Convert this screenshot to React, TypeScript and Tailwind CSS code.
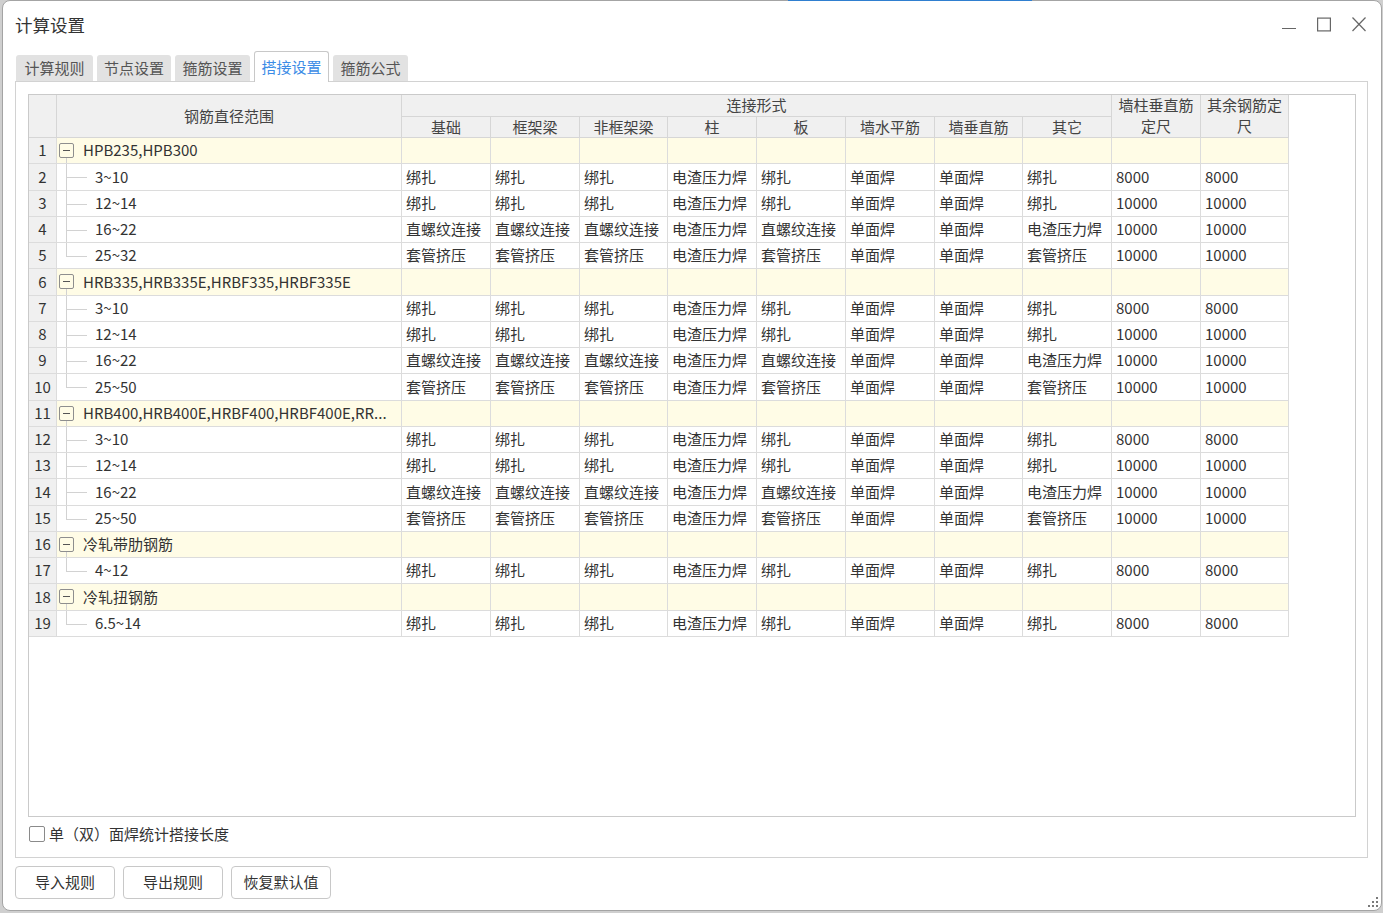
import React from 'react';

const BZ = (v: string) => ['绑扎', '绑扎', '绑扎', '电渣压力焊', '绑扎', '单面焊', '单面焊', '绑扎', v, v];
const ZL = ['直螺纹连接', '直螺纹连接', '直螺纹连接', '电渣压力焊', '直螺纹连接', '单面焊', '单面焊', '电渣压力焊', '10000', '10000'];
const TG = ['套管挤压', '套管挤压', '套管挤压', '电渣压力焊', '套管挤压', '单面焊', '单面焊', '套管挤压', '10000', '10000'];

type Group = { name: string; children: [string, string[]][] };
const groups: Group[] = [
  { name: 'HPB235,HPB300', children: [['3~10', BZ('8000')], ['12~14', BZ('10000')], ['16~22', ZL], ['25~32', TG]] },
  { name: 'HRB335,HRB335E,HRBF335,HRBF335E', children: [['3~10', BZ('8000')], ['12~14', BZ('10000')], ['16~22', ZL], ['25~50', TG]] },
  { name: 'HRB400,HRB400E,HRBF400,HRBF400E,RR...', children: [['3~10', BZ('8000')], ['12~14', BZ('10000')], ['16~22', ZL], ['25~50', TG]] },
  { name: '冷轧带肋钢筋', children: [['4~12', BZ('8000')]] },
  { name: '冷轧扭钢筋', children: [['6.5~14', BZ('8000')]] },
];

const subHeaders = ['基础', '框架梁', '非框架梁', '柱', '板', '墙水平筋', '墙垂直筋', '其它'];

const cell = 'border-r border-b border-[#dcdcdc] flex items-center overflow-hidden whitespace-nowrap';
const head = 'border-r border-b border-[#d6d6d6] bg-[#f0f0f0] flex items-center justify-center text-center text-[#444] leading-[21px] pb-[2px]';

function Rows() {
  const out: React.ReactNode[] = [];
  let n = 0;
  groups.forEach((g, gi) => {
    n += 1;
    const gn = n;
    out.push(
      <div key={`g${gi}-n`} className={`${cell} justify-center bg-[#f0f0f0]`}>{gn}</div>
    );
    out.push(
      <div key={`g${gi}-name`} className={`${cell} relative bg-[#fffce6]`}>
        <div className="ml-[2px] w-[15px] h-[15px] border border-[#8e8e8e] rounded-[2px] flex items-center justify-center shrink-0">
          <div className="w-[7px] h-[1px] bg-[#555]" />
        </div>
        <span className="ml-[9px] truncate">{g.name}</span>
        <div className="absolute left-[9px] top-[20px] bottom-[-1px] w-[1px] bg-[#d2d2d2]" />
      </div>
    );
    for (let i = 0; i < 10; i++) {
      out.push(<div key={`g${gi}-c${i}`} className={`${cell} bg-[#fffce6]`} />);
    }
    g.children.forEach(([label, vals], ci) => {
      n += 1;
      const last = ci === g.children.length - 1;
      out.push(
        <div key={`c${gi}-${ci}-n`} className={`${cell} justify-center bg-[#f0f0f0]`}>{n}</div>
      );
      out.push(
        <div key={`c${gi}-${ci}-name`} className={`${cell} relative bg-white pl-[38px]`}>
          <div className={`absolute left-[9px] top-[-1px] w-[1px] bg-[#d2d2d2] ${last ? 'h-[14px]' : 'bottom-[-1px]'}`} />
          <div className="absolute left-[9px] top-[13px] w-[21px] h-[1px] bg-[#d2d2d2]" />
          <span>{label}</span>
        </div>
      );
      vals.forEach((v, vi) => {
        out.push(
          <div key={`c${gi}-${ci}-v${vi}`} className={`${cell} bg-white pl-[4px]`}>{v}</div>
        );
      });
    });
  });
  return <>{out}</>;
}

export default function App() {
  return (
    <div className="relative w-[1383px] h-[913px] bg-[#cfcfcf] pl-[2px] overflow-hidden font-['Noto_Sans_CJK_SC',sans-serif] text-[15px] text-[#333]">
      <div className="relative w-[1380px] h-[911px] bg-white border border-[#a4a4a4] rounded-[8px] overflow-hidden flex flex-col">
        {/* title bar */}
        <div className="h-[50px] shrink-0 flex items-start">
          <div className="pl-[12px] pt-[11px] text-[17.5px] leading-[26px] text-[#333]">计算设置</div>
          <div className="ml-auto mr-[15px] mt-[16px] flex gap-[21px]">
            <svg width="14" height="15" viewBox="0 0 14 15">
              <line x1="0" y1="11.5" x2="14" y2="11.5" stroke="#666" strokeWidth="1.2" />
            </svg>
            <svg width="14" height="15" viewBox="0 0 14 15">
              <rect x="0.6" y="1.1" width="12.8" height="12.8" fill="none" stroke="#666" strokeWidth="1.2" />
            </svg>
            <svg width="14" height="15" viewBox="0 0 14 15">
              <line x1="0.5" y1="0.5" x2="13.5" y2="14" stroke="#666" strokeWidth="1.2" />
              <line x1="13.5" y1="0.5" x2="0.5" y2="14" stroke="#666" strokeWidth="1.2" />
            </svg>
          </div>
        </div>
        {/* tabs */}
        <div className="h-[30px] shrink-0 flex items-end gap-[4px] pl-[13px]">
          <div className="w-[77px] h-[26px] bg-[#e2e2e2] rounded-t-[3px] flex items-center justify-center text-[#555]">计算规则</div>
          <div className="w-[74px] h-[26px] bg-[#e2e2e2] rounded-t-[3px] flex items-center justify-center text-[#555]">节点设置</div>
          <div className="w-[75px] h-[26px] bg-[#e2e2e2] rounded-t-[3px] flex items-center justify-center text-[#555]">箍筋设置</div>
          <div className="relative z-10 -mb-[1px] w-[75px] h-[31px] bg-white border border-b-0 border-[#c8c8c8] rounded-t-[3px] flex items-center justify-center text-[#3b8ce6]">搭接设置</div>
          <div className="w-[75px] h-[26px] bg-[#e2e2e2] rounded-t-[3px] flex items-center justify-center text-[#555]">箍筋公式</div>
        </div>
        {/* panel */}
        <div className="ml-[12px] w-[1353px] h-[777px] shrink-0 border border-[#d2d2d2] pt-[12px] pl-[12px] flex flex-col">
          <div className="w-[1328px] h-[723px] shrink-0 border border-[#cacaca] bg-white">
            <div className="grid grid-cols-[28px_345px_89px_89px_88px_89px_89px_89px_88px_89px_89px_88px] grid-rows-[22px_21px_repeat(19,26.26px)] w-[1260px]">
              <div className={`${head} row-span-2`} />
              <div className={`${head} row-span-2`}>钢筋直径范围</div>
              <div className={`${head} col-span-8`}>连接形式</div>
              <div className={`${head} row-span-2 flex-col`}>墙柱垂直筋定尺</div>
              <div className={`${head} row-span-2 flex-col`}>其余钢筋定尺</div>
              {subHeaders.map((h) => (
                <div key={h} className={head}>{h}</div>
              ))}
              <Rows />
            </div>
          </div>
          <div className="flex items-start pt-[9px]">
            <div className="ml-[1px] w-[16px] h-[16px] border border-[#8a8a8a] rounded-[2px] bg-white shrink-0" />
            <span className="ml-[4px] leading-[16px]">单（双）面焊统计搭接长度</span>
          </div>
        </div>
        {/* buttons */}
        <div className="mt-[8px] ml-[12px] flex gap-[8px]">
          <div className="w-[100px] h-[33px] border border-[#c8c8c8] rounded-[4px] bg-white flex items-center justify-center">导入规则</div>
          <div className="w-[100px] h-[33px] border border-[#c8c8c8] rounded-[4px] bg-white flex items-center justify-center">导出规则</div>
          <div className="w-[100px] h-[33px] border border-[#c8c8c8] rounded-[4px] bg-white flex items-center justify-center">恢复默认值</div>
        </div>
        {/* resize grip */}
        <svg className="absolute right-[2px] bottom-[2px]" width="11" height="11" viewBox="0 0 11 11">
          <rect x="8" y="0" width="2" height="2" fill="#7a7a7a" />
          <rect x="4" y="4" width="2" height="2" fill="#7a7a7a" />
          <rect x="8" y="4" width="2" height="2" fill="#7a7a7a" />
          <rect x="0" y="8" width="2" height="2" fill="#7a7a7a" />
          <rect x="4" y="8" width="2" height="2" fill="#7a7a7a" />
          <rect x="8" y="8" width="2" height="2" fill="#7a7a7a" />
        </svg>
      </div>
      <div className="absolute top-0 left-[788px] w-[244px] h-[1px] bg-[#2f7fd0]" />
    </div>
  );
}
